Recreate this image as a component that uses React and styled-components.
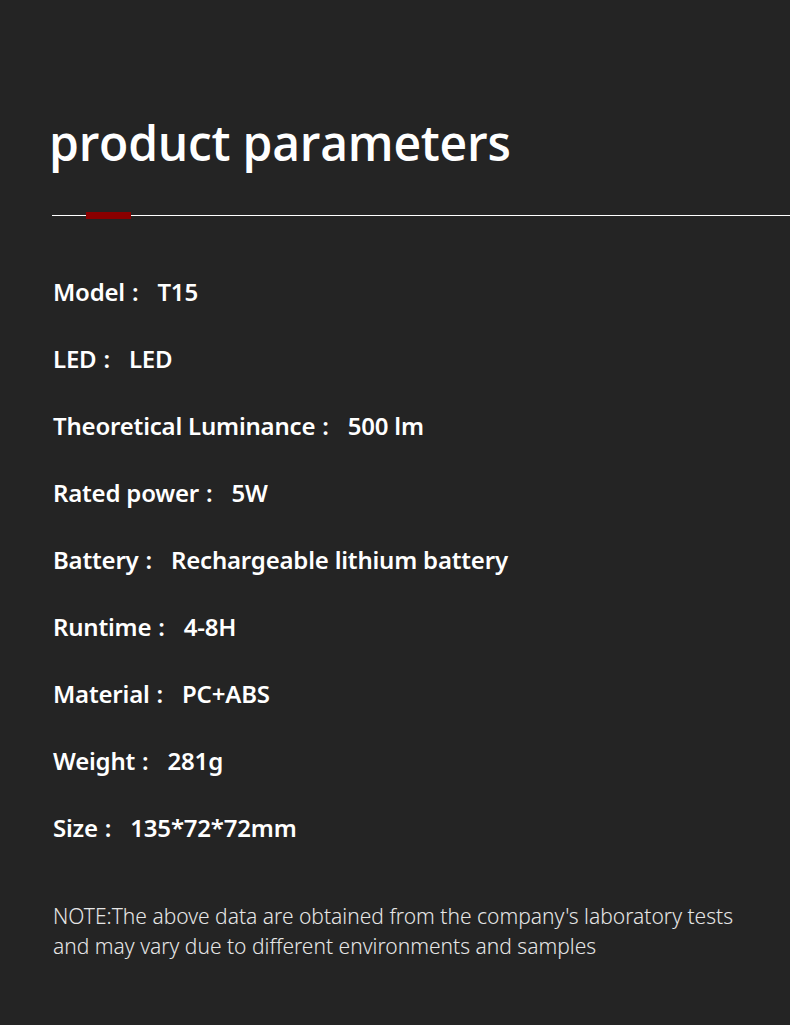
import React from 'react';
import styled, { createGlobalStyle } from 'styled-components';

const GlobalStyle = createGlobalStyle`
  html, body {
    margin: 0;
    padding: 0;
    background: #242424;
  }
  body {
    font-family: "Noto Sans", "Noto Sans CJK SC", sans-serif;
    color: #fff;
  }
`;

const Page = styled.div`
  width: 790px;
  height: 1025px;
  background: #242424;
  padding-top: 108px;
  box-sizing: border-box;
  overflow: hidden;
`;

const Title = styled.h1`
  margin: 0 0 0 49px;
  font-family: "Open Sans", "Noto Sans", sans-serif;
  font-weight: 600;
  font-size: 48px;
  line-height: 70px;
  letter-spacing: -0.25px;
  color: #fff;
`;

const Divider = styled.div`
  position: relative;
  margin: 37px 0 0 52px;
  height: 1px;
  background: #fff;
`;

const Accent = styled.span`
  position: absolute;
  left: 34px;
  top: -3px;
  width: 45px;
  height: 7px;
  background: #8b0000;
`;

const Specs = styled.ul`
  list-style: none;
  margin: 60px 0 0 53px;
  padding: 0;
  display: flex;
  flex-direction: column;
  gap: 35px;
`;

const Spec = styled.li`
  display: flex;
  font-family: "Noto Sans", sans-serif;
  font-size: 24px;
  font-weight: 600;
  line-height: 32px;
  letter-spacing: -0.2px;
  color: #fff;
`;

const Colon = styled.span`
  margin-left: 7px;
`;

const Value = styled.span`
  margin-left: ${p => p.$gap || 19}px;
`;

const Note = styled.p`
  margin: 57px 0 0 53px;
  width: 700px;
  font-family: "Noto Sans", sans-serif;
  font-weight: 300;
  font-size: 21px;
  line-height: 30px;
  color: #e6e6e6;
`;

const specs = [
  ['Model', 'T15'],
  ['LED', 'LED'],
  ['Theoretical Luminance', '500 lm'],
  ['Rated power', '5W'],
  ['Battery', 'Rechargeable lithium battery'],
  ['Runtime', '4-8H'],
  ['Material', 'PC+ABS'],
  ['Weight', '281g'],
  ['Size', '135*72*72mm'],
];

export default function App() {
  return (
    <Page>
      <GlobalStyle />
      <Title>product parameters</Title>
      <Divider>
        <Accent />
      </Divider>
      <Specs>
        {specs.map(([label, value]) => (
          <Spec key={label}>
            <span>{label}</span>
            <Colon>:</Colon>
            <Value>{value}</Value>
          </Spec>
        ))}
      </Specs>
      <Note>
        NOTE:The above data are obtained from the company's laboratory tests
        and may vary due to different environments and samples
      </Note>
    </Page>
  );
}
